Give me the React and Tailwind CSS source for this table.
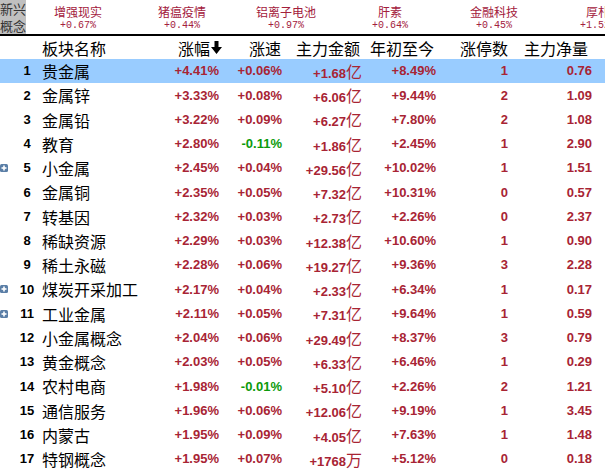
import React from 'react';

const cjk = { fontFamily: '"Noto Sans CJK SC", "Noto Sans", sans-serif' };
const num = { fontFamily: '"Liberation Sans", Arial, sans-serif' };
const mono = { fontFamily: '"Liberation Mono", "Courier New", monospace' };

const topItems = [
  ['增强现实', '+0.67%'],
  ['猪瘟疫情', '+0.44%'],
  ['铝离子电池', '+0.97%'],
  ['肝素', '+0.64%'],
  ['金融科技', '+0.45%'],
  ['厚朴', '+1.52%'],
];

// [no, name, 涨幅, 涨速, 金额, 单位, 年初至今, 涨停数, 净量, 有展开]
const rows = [
  [1, '贵金属', '+4.41%', '+0.06%', '+1.68', '亿', '+8.49%', '1', '0.76', false],
  [2, '金属锌', '+3.33%', '+0.08%', '+6.06', '亿', '+9.44%', '2', '1.09', false],
  [3, '金属铅', '+3.22%', '+0.09%', '+6.27', '亿', '+7.80%', '2', '1.08', false],
  [4, '教育', '+2.80%', '-0.11%', '+1.86', '亿', '+2.45%', '1', '2.90', false],
  [5, '小金属', '+2.45%', '+0.04%', '+29.56', '亿', '+10.02%', '1', '1.51', true],
  [6, '金属铜', '+2.35%', '+0.05%', '+7.32', '亿', '+10.31%', '0', '0.57', false],
  [7, '转基因', '+2.32%', '+0.03%', '+2.73', '亿', '+2.26%', '0', '2.37', false],
  [8, '稀缺资源', '+2.29%', '+0.03%', '+12.38', '亿', '+10.60%', '1', '0.90', false],
  [9, '稀土永磁', '+2.28%', '+0.06%', '+19.27', '亿', '+9.36%', '3', '2.28', false],
  [10, '煤炭开采加工', '+2.17%', '+0.04%', '+2.33', '亿', '+6.34%', '1', '0.17', true],
  [11, '工业金属', '+2.11%', '+0.05%', '+7.31', '亿', '+9.64%', '1', '0.59', true],
  [12, '小金属概念', '+2.04%', '+0.06%', '+29.49', '亿', '+8.37%', '3', '0.79', false],
  [13, '黄金概念', '+2.03%', '+0.05%', '+6.33', '亿', '+6.46%', '1', '0.29', false],
  [14, '农村电商', '+1.98%', '-0.01%', '+5.10', '亿', '+2.26%', '2', '1.21', false],
  [15, '通信服务', '+1.96%', '+0.06%', '+12.06', '亿', '+9.19%', '1', '3.45', false],
  [16, '内蒙古', '+1.95%', '+0.09%', '+4.05', '亿', '+7.63%', '1', '1.48', false],
  [17, '特钢概念', '+1.95%', '+0.07%', '+1768', '万', '+5.12%', '0', '0.18', false],
];

function PlusIcon() {
  return (
    <svg width="8" height="8" viewBox="0 0 8 8" className="block">
      <rect x="0" y="0" width="8" height="8" rx="1.5" fill="#5a7ea6" />
      <rect x="1.5" y="3.2" width="5" height="1.6" fill="#fff" />
      <rect x="3.2" y="1.5" width="1.6" height="5" fill="#fff" />
    </svg>
  );
}

function DownArrow() {
  return (
    <svg width="11" height="13" viewBox="0 0 11 13" className="inline-block ml-[1px]">
      <path d="M3.5 0 H7.5 V6 H11 L5.5 13 L0 6 H3.5 Z" fill="#000" />
    </svg>
  );
}

function Row({ r, active }) {
  const [no, name, zf, zs, je, unit, nc, zt, jl, plus] = r;
  const red = 'text-[#a82434]';
  return (
    <div className={`flex items-center h-[24.25px] ${active ? 'bg-[#99ccff]' : 'bg-white'}`}>
      <div className="w-[16px] shrink-0 flex items-center">{plus && <PlusIcon />}</div>
      <div className="w-[22px] shrink-0 text-center text-[13px] font-bold text-black" style={num}>{no}</div>
      <div className="w-[112px] shrink-0 pl-[4px] text-[16px] text-black whitespace-nowrap" style={cjk}>{name}</div>
      <div className={`w-[69px] shrink-0 text-right text-[13px] font-bold ${red}`} style={num}>{zf}</div>
      <div
        className={`w-[63px] shrink-0 text-right text-[13px] font-bold ${zs.startsWith('-') ? 'text-[#0b9a0b]' : red}`}
        style={num}
      >
        {zs}
      </div>
      <div className={`w-[80px] shrink-0 text-right text-[13px] font-bold ${red} whitespace-nowrap`} style={num}>
        {je}
        <span className="text-[16px] font-normal" style={cjk}>{unit}</span>
      </div>
      <div className={`w-[74px] shrink-0 text-right text-[13px] font-bold ${red}`} style={num}>{nc}</div>
      <div className={`w-[72px] shrink-0 text-right text-[13px] font-bold ${red}`} style={num}>{zt}</div>
      <div className={`w-[84px] shrink-0 text-right text-[13px] font-bold ${red}`} style={num}>{jl}</div>
    </div>
  );
}

export default function App() {
  return (
    <div className="w-[605px] h-[474px] overflow-hidden bg-white">
      {/* 顶部概念栏 */}
      <div className="flex h-[36px] border-b-2 border-black">
        <div
          className="w-[26px] h-[34px] shrink-0 bg-[#c0c0c0] flex flex-col justify-center items-start whitespace-nowrap text-[13px] leading-[17px] text-[#333]"
          style={cjk}
        >
          <span>新兴</span>
          <span>概念</span>
        </div>
        <div className="flex overflow-hidden">
          {topItems.map(([n, p]) => (
            <div key={n} className="w-[104px] shrink-0 flex flex-col items-center pt-[3px]">
              <span className="text-[12px] leading-[17px] text-[#a3203c] whitespace-nowrap" style={cjk}>{n}</span>
              <span className="text-[10px] leading-[12px] text-[#a3203c]" style={mono}>{p}</span>
            </div>
          ))}
        </div>
      </div>

      {/* 表头 */}
      <div className="flex items-center h-[23px] text-[16px] text-black whitespace-nowrap" style={cjk}>
        <div className="w-[38px] shrink-0" />
        <div className="w-[112px] shrink-0 pl-[4px]">板块名称</div>
        <div className="w-[72px] shrink-0 text-right flex items-center justify-end">
          涨幅<DownArrow />
        </div>
        <div className="w-[59px] shrink-0 text-right">涨速</div>
        <div className="w-[79px] shrink-0 text-right">主力金额</div>
        <div className="w-[74px] shrink-0 text-right">年初至今</div>
        <div className="w-[74px] shrink-0 text-right">涨停数</div>
        <div className="w-[80px] shrink-0 text-right">主力净量</div>
      </div>

      {rows.map((r, i) => (
        <Row key={r[0]} r={r} active={i === 0} />
      ))}
    </div>
  );
}
